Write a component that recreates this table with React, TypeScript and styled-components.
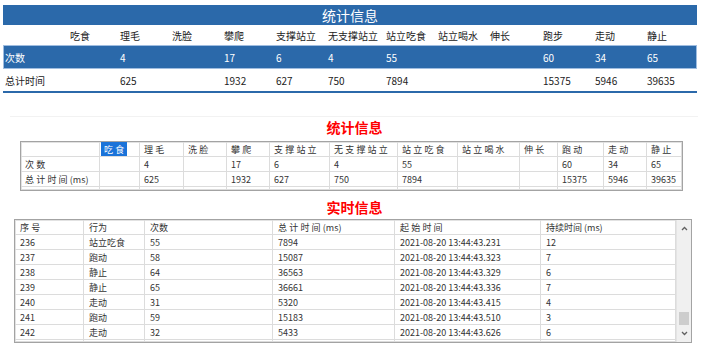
import { FC, ReactNode } from 'react'
import styled, { createGlobalStyle } from 'styled-components'

const Global = createGlobalStyle`
  body {
    margin: 0;
    background: #fff;
    font-family: "Noto Sans CJK SC", "Noto Sans", sans-serif;
  }
`

const Page = styled.div`
  width: 705px;
  height: 349px;
  overflow: hidden;
  padding-top: 5px;
  box-sizing: border-box;
`

/* ---------- top summary panel ---------- */

const Summary = {
  Wrap: styled.section`
    margin-left: 3px;
    width: 694px;
    border-bottom: 2px solid #2b69aa;
  `,
  Bar: styled.div`
    height: 20px;
    background: #2b69aa;
    color: #fff;
    font-size: 14px;
    line-height: 20px;
    text-align: center;
  `,
  Row: styled.div<{ $h: number; $active?: boolean }>`
    display: grid;
    grid-template-columns: 67px 50px 52px 52px 52px 52px 58px 52px 52px 53px 52px 52px 1fr;
    height: ${p => p.$h}px;
    align-items: center;
    font-size: 10px;
    color: ${p => (p.$active ? '#fff' : '#222')};
    background: ${p => (p.$active ? '#2b69aa' : 'transparent')};
    box-shadow: ${p => (p.$active ? 'inset 0 0 0 1px #9fbde0' : 'none')};
  `,
  Cell: styled.span<{ $first?: boolean }>`
    padding-left: ${p => (p.$first ? 2 : 0)}px;
    white-space: nowrap;
  `,
}

const Rule = styled.div`
  margin: 23px 7px 0 10px;
  height: 1px;
  background: #f2f2f2;
`

const RedTitle = styled.h2<{ $top: number }>`
  margin: ${p => p.$top}px 0 0;
  text-align: center;
  color: #f00;
  font-size: 14px;
  font-weight: 700;
  line-height: 16px;
  padding-left: 4px;
`

/* ---------- classic grid tables ---------- */

const Frame = styled.div<{ $left: number; $width: number; $top: number }>`
  margin: ${p => p.$top}px 0 0 ${p => p.$left}px;
  width: ${p => p.$width}px;
  border: 1px solid #a3a3a3;
  box-shadow: inset 0 0 0 1px #e2e2e2;
  box-sizing: border-box;
  display: flex;
  overflow: hidden;
`

const Grid = styled.div<{ $cols: string; $rows: string }>`
  flex: 1;
  display: grid;
  grid-template-columns: ${p => p.$cols};
  grid-template-rows: ${p => p.$rows};
  font-size: 9px;
  color: #333;
`

const Cell = styled.div<{ $pad?: number }>`
  display: flex;
  align-items: center;
  padding-left: ${p => p.$pad ?? 4}px;
  border-right: 1px solid #dcdcdc;
  border-bottom: 1px solid #dcdcdc;
  white-space: nowrap;
  overflow: hidden;
`

const Spaced = styled.span`
  letter-spacing: 2.2px;
`

const Picked = styled(Spaced)`
  background: #1a73d9;
  color: #fff;
  padding: 1px 1px 1px 3px;
  margin-left: -3px;
`

const Scroll = {
  Track: styled.div`
    width: 14px;
    background: #f0f0f0;
    border-left: 1px solid #e4e4e4;
    display: flex;
    flex-direction: column;
    align-items: center;
  `,
  Arrow: styled.svg`
    width: 7px;
    height: 5px;
    margin: 6px 0;
  `,
  Gap: styled.div`
    flex: 1;
    display: flex;
    flex-direction: column;
    justify-content: flex-end;
  `,
  Thumb: styled.div`
    width: 10px;
    height: 13px;
    background: #cdcdcd;
  `,
}

const statHead = ['', '吃食', '理毛', '洗脸', '攀爬', '支撑站立', '无支撑站立', '站立吃食', '站立喝水', '伸长', '跑步', '走动', '静止']
const counts = ['次数', '', '4', '', '17', '6', '4', '55', '', '', '60', '34', '65']
const times = ['总计时间', '', '625', '', '1932', '627', '750', '7894', '', '', '15375', '5946', '39635']

const gridHead = ['', '吃食', '理毛', '洗脸', '攀爬', '支撑站立', '无支撑站立', '站立吃食', '站立喝水', '伸长', '跑动', '走动', '静止']
const gridCounts = ['次数', '', '4', '', '17', '6', '4', '55', '', '', '60', '34', '65']
const gridTimes = ['', '', '625', '', '1932', '627', '750', '7894', '', '', '15375', '5946', '39635']

const live = [
  ['236', '站立吃食', '55', '7894', '2021-08-20 13:44:43.231', '12'],
  ['237', '跑动', '58', '15087', '2021-08-20 13:44:43.323', '7'],
  ['238', '静止', '64', '36563', '2021-08-20 13:44:43.329', '6'],
  ['239', '静止', '65', '36661', '2021-08-20 13:44:43.336', '7'],
  ['240', '走动', '31', '5320', '2021-08-20 13:44:43.415', '4'],
  ['241', '跑动', '59', '15183', '2021-08-20 13:44:43.510', '3'],
  ['242', '走动', '32', '5433', '2021-08-20 13:44:43.626', '6'],
]

const liveHead: ReactNode[] = [
  <Spaced>序号</Spaced>,
  '行为',
  '次数',
  <><Spaced>总计时间</Spaced> (ms)</>,
  <Spaced>起始时间</Spaced>,
  '持续时间 (ms)',
]

const App: FC = () => (
  <Page>
    <Global />
    <Summary.Wrap>
      <Summary.Bar>统计信息</Summary.Bar>
      <Summary.Row $h={20}>
        {statHead.map((h, i) => (
          <Summary.Cell key={i}>{h}</Summary.Cell>
        ))}
      </Summary.Row>
      <Summary.Row $h={24} $active>
        {counts.map((v, i) => (
          <Summary.Cell key={i} $first={i === 0}>{v}</Summary.Cell>
        ))}
      </Summary.Row>
      <Summary.Row $h={22}>
        {times.map((v, i) => (
          <Summary.Cell key={i} $first={i === 0}>{v}</Summary.Cell>
        ))}
      </Summary.Row>
    </Summary.Wrap>

    <Rule />
    <RedTitle $top={2}>统计信息</RedTitle>

    <Frame $left={20} $width={663} $top={6}>
      <Grid
        $cols="79px 40px 44px 43px 43px 60px 68px 60px 62px 38px 46px 43px 1fr"
        $rows="15px 15px 15px 3px"
      >
        {gridHead.map((h, i) => (
          <Cell key={`h${i}`}>{i === 1 ? <Picked>{h}</Picked> : <Spaced>{h}</Spaced>}</Cell>
        ))}
        {gridCounts.map((v, i) => (
          <Cell key={`c${i}`}>{i === 0 ? <Spaced>{v}</Spaced> : v}</Cell>
        ))}
        {gridTimes.map((v, i) => (
          <Cell key={`t${i}`}>
            {i === 0 ? (
              <>
                <Spaced>总计时间</Spaced>(ms)
              </>
            ) : (
              v
            )}
          </Cell>
        ))}
        {gridHead.map((_, i) => (
          <Cell key={`e${i}`} />
        ))}
      </Grid>
    </Frame>

    <RedTitle $top={8}>实时信息</RedTitle>

    <Frame $left={14} $width={678} $top={4}>
      <Grid $cols="69px 61px 128px 122px 146px 1fr" $rows="15px repeat(7, 15px) 2px">
        {liveHead.map((h, i) => (
          <Cell key={`lh${i}`} $pad={5}>{h}</Cell>
        ))}
        {live.map((r, ri) =>
          r.map((v, ci) => (
            <Cell key={`r${ri}-${ci}`} $pad={5}>{v}</Cell>
          )),
        )}
        {liveHead.map((_, i) => (
          <Cell key={`le${i}`} />
        ))}
      </Grid>
      <Scroll.Track>
        <Scroll.Arrow viewBox="0 0 7 5">
          <path d="M1 4 L3.5 1.5 L6 4" fill="none" stroke="#606060" strokeWidth="1.3" />
        </Scroll.Arrow>
        <Scroll.Gap>
          <Scroll.Thumb />
        </Scroll.Gap>
        <Scroll.Arrow viewBox="0 0 7 5">
          <path d="M1 1 L3.5 3.5 L6 1" fill="none" stroke="#606060" strokeWidth="1.3" />
        </Scroll.Arrow>
      </Scroll.Track>
    </Frame>
  </Page>
)

export default App
